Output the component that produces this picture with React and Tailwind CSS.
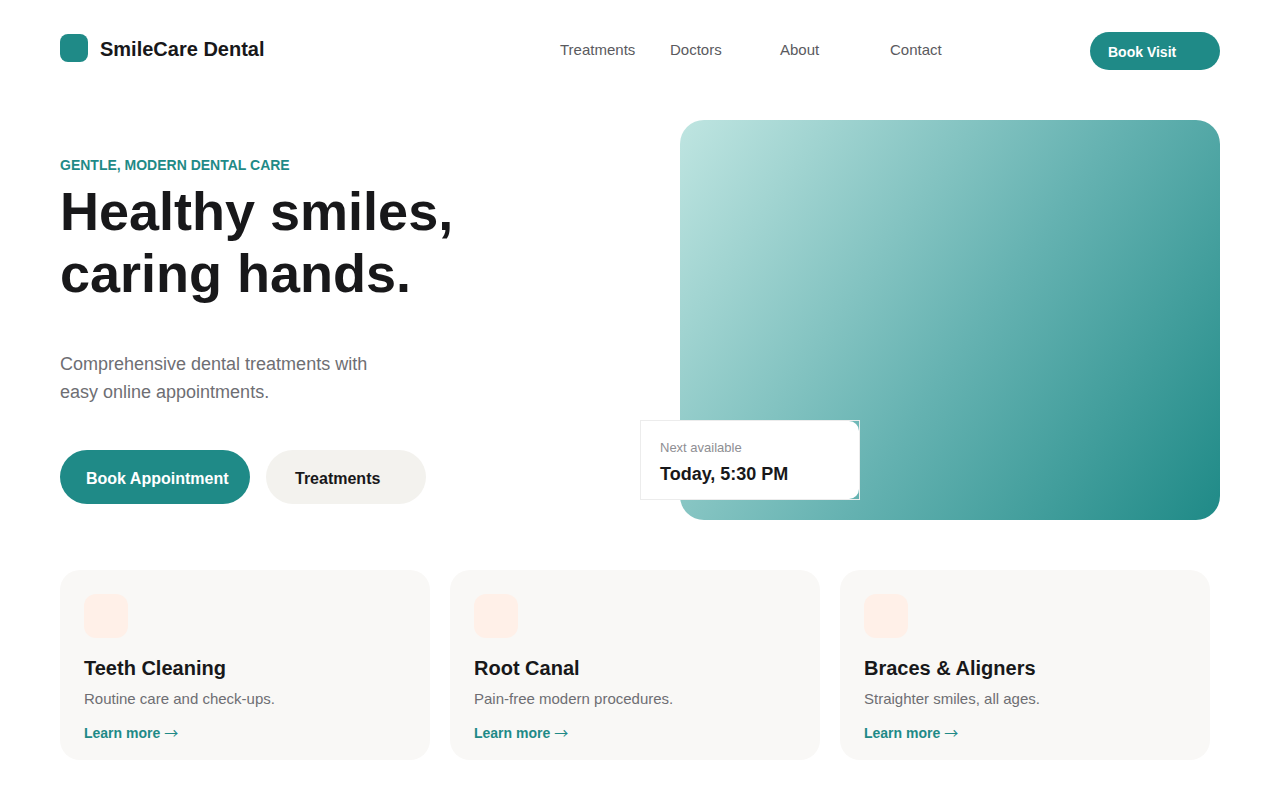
const navLinks = [
  { label: 'Treatments', href: '#treatments' },
  { label: 'Doctors', href: '#doctors' },
  { label: 'About', href: '#about' },
  { label: 'Contact', href: '#contact' },
];

const services = [
  { title: 'Teeth Cleaning', text: 'Routine care and check-ups.' },
  { title: 'Root Canal', text: 'Pain-free modern procedures.' },
  { title: 'Braces & Aligners', text: 'Straighter smiles, all ages.' },
];

function Header() {
  return (
    <header className="flex items-start">
      <a href="#home" className="flex h-8 flex-1 items-center gap-3 text-xl font-bold">
        <span className="size-7 rounded-lg bg-[#1f8a87]" />
        <span className="pt-0.5">SmileCare Dental</span>
      </a>
      <nav className="flex h-9 w-[530px] items-center text-[15px] text-[#5a5a5e]">
        {navLinks.map(({ label, href }) => (
          <a key={label} href={href} className="w-[110px]">
            {label}
          </a>
        ))}
      </nav>
      <button
        type="button"
        className="h-[38px] w-[130px] rounded-full bg-[#1f8a87] px-[18px] pt-0.5 text-left text-sm font-bold text-white"
      >
        Book Visit
      </button>
    </header>
  );
}

function NextAvailable() {
  return (
    <div className="absolute bottom-5 -left-10 h-20 w-[220px] border border-[#ececec]">
      <div className="h-full rounded-[10px] bg-white px-[19px] pt-[17px]">
        <p className="text-[13px] leading-5 text-[#8e8e93]">Next available</p>
        <p className="mt-1 text-lg leading-6 font-bold">Today, 5:30 PM</p>
      </div>
    </div>
  );
}

function Hero() {
  return (
    <section className="mt-[50px] flex min-h-[400px]">
      <div className="flex-1 pt-[35px]">
        <p className="text-sm font-bold text-[#1f8a87]">GENTLE, MODERN DENTAL CARE</p>
        <h1 className="mt-[5px] text-[54px] leading-[62px] font-bold">
          Healthy smiles,
          <br />
          caring hands.
        </h1>
        <p className="mt-[46px] text-lg leading-7 text-[#6e6e73]">
          Comprehensive dental treatments with
          <br />
          easy online appointments.
        </p>
        <div className="mt-11 flex gap-4 text-base font-bold">
          <button
            type="button"
            className="h-[54px] w-[190px] rounded-full bg-[#1f8a87] px-[26px] pt-1 text-left whitespace-nowrap text-white"
          >
            Book Appointment
          </button>
          <button
            type="button"
            className="h-[54px] w-40 rounded-full bg-[#f3f2ee] px-[29px] pt-1 text-left"
          >
            Treatments
          </button>
        </div>
      </div>
      <div className="relative w-[540px] rounded-3xl bg-[linear-gradient(125deg,#bfe5e1,#65b2b1_54%,#1f8a87)]">
        <NextAvailable />
      </div>
    </section>
  );
}

function ServiceCard({ title, text }) {
  return (
    <article className="min-h-[190px] rounded-[20px] bg-[#f9f8f6] p-6 pb-4">
      <div className="size-11 rounded-xl bg-[#fff0e8]" />
      <h2 className="mt-4 text-xl leading-7 font-bold">{title}</h2>
      <p className="mt-[5px] text-[15px] leading-6 text-[#6e6e73]">{text}</p>
      <a href="#learn" className="mt-3 block text-sm leading-5 font-bold text-[#1f8a87]">
        Learn more{' '}
        <span className="font-['Noto_Sans_CJK_JP',sans-serif] leading-4 font-normal">→</span>
      </a>
    </article>
  );
}

function App() {
  return (
    <main className="min-h-screen bg-white px-[60px] pt-8 pb-10 font-['Liberation_Sans',Arial,sans-serif] text-[#18181a]">
      <Header />
      <Hero />
      <section className="mt-[50px] mr-[10px] grid grid-cols-3 gap-5">
        {services.map((service) => (
          <ServiceCard key={service.title} {...service} />
        ))}
      </section>
    </main>
  );
}

export default App;
